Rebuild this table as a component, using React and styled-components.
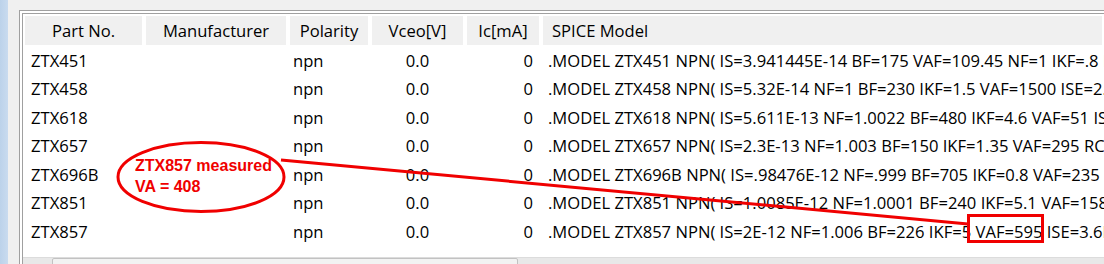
import styled, { createGlobalStyle } from "styled-components";

const GlobalStyle = createGlobalStyle`
  html, body {
    margin: 0;
    padding: 0;
    overflow: hidden;
    background: #f0f0f0;
  }
`;

const COLUMNS = "121px 144px 82px 95px 76px 1fr";

const parts = [
  { part: "ZTX451", spice: ".MODEL ZTX451 NPN( IS=3.941445E-14 BF=175 VAF=109.45 NF=1 IKF=.8 ISE=1.7E-14 NE=1.5" },
  { part: "ZTX458", spice: ".MODEL ZTX458 NPN( IS=5.32E-14 NF=1 BF=230 IKF=1.5 VAF=1500 ISE=2.1E-13 NE=1.5" },
  { part: "ZTX618", spice: ".MODEL ZTX618 NPN( IS=5.611E-13 NF=1.0022 BF=480 IKF=4.6 VAF=51 ISE=1.1E-13 NE=1.4" },
  { part: "ZTX657", spice: ".MODEL ZTX657 NPN( IS=2.3E-13 NF=1.003 BF=150 IKF=1.35 VAF=295 RC=.15 ISE=1E-13" },
  { part: "ZTX696B", spice: ".MODEL ZTX696B NPN( IS=.98476E-12 NF=.999 BF=705 IKF=0.8 VAF=235 ISE=1.2E-13" },
  { part: "ZTX851", spice: ".MODEL ZTX851 NPN( IS=1.0085E-12 NF=1.0001 BF=240 IKF=5.1 VAF=158 ISE=2.5E-13" },
  { part: "ZTX857", spice: ".MODEL ZTX857 NPN( IS=2E-12 NF=1.006 BF=226 IKF=5 VAF=595 ISE=3.6E-13 NE=1.5" },
];

const Window = styled.div`
  position: relative;
  display: flex;
  height: 264px;
  font-family: "Open Sans", "Liberation Sans", sans-serif;
  font-size: 16.6px;
  color: #000;
`;

const Edge = styled.div`
  width: 8px;
  background: linear-gradient(to right, #bcd2ea, #c9dbef);
`;

const Pane = styled.div`
  flex: 1;
  min-width: 0;
  padding: 10px 0 0 11px;
  background: #f0f0f0;
`;

const Grid = styled.div`
  height: 100%;
  box-sizing: border-box;
  display: flex;
  flex-direction: column;
  background: #fff;
  border-top: 4px double #a0a0a0;
  border-left: 4px double #a0a0a0;
  overflow: hidden;
`;

const HeaderRow = styled.div`
  flex-shrink: 0;
  display: grid;
  grid-template-columns: ${COLUMNS};
  height: 32px;
`;

const HeaderCell = styled.div`
  display: flex;
  align-items: center;
  justify-content: ${(p) => (p.$left ? "flex-start" : "center")};
  padding-left: ${(p) => (p.$left ? "9px" : "0")};
  background: #f0f0f0;
  border: 2px solid #fff;
  border-bottom-width: 1px;
  white-space: nowrap;
  overflow: hidden;
`;

const Row = styled.div`
  flex-shrink: 0;
  display: grid;
  grid-template-columns: ${COLUMNS};
  height: 28.5px;
  align-items: center;
`;

const Cell = styled.div`
  text-align: ${(p) => p.$align || "left"};
  padding: ${(p) => p.$pad || "0 8px"};
  white-space: nowrap;
  overflow: hidden;
`;

const Scrollbar = styled.div`
  flex-shrink: 0;
  margin-top: 11px;
  height: 18px;
  display: flex;
  background: #e8e8e8;
  border-top: 1px solid #dcdcdc;
`;

const ArrowButton = styled.div`
  width: 29px;
`;

const Thumb = styled.div`
  width: 464px;
  background: #f2f2f2;
  border: 1px solid #c2c2c2;
  border-radius: 2px 2px 0 0;
`;

const Overlay = styled.svg`
  position: absolute;
  left: 0;
  top: 0;
  pointer-events: none;
`;

const Note = styled.div`
  position: absolute;
  left: 135px;
  top: 155px;
  font-family: "Liberation Sans", Arial, sans-serif;
  font-weight: bold;
  font-size: 16px;
  line-height: 21px;
  color: #f00000;
  white-space: nowrap;
`;

export default function App() {
  return (
    <>
      <GlobalStyle />
      <Window>
        <Edge />
        <Pane>
          <Grid>
            <HeaderRow>
              <HeaderCell>Part No.</HeaderCell>
              <HeaderCell>Manufacturer</HeaderCell>
              <HeaderCell>Polarity</HeaderCell>
              <HeaderCell>Vceo[V]</HeaderCell>
              <HeaderCell>Ic[mA]</HeaderCell>
              <HeaderCell $left>SPICE Model</HeaderCell>
            </HeaderRow>
            {parts.map((p) => (
              <Row key={p.part}>
                <Cell>{p.part}</Cell>
                <Cell />
                <Cell $pad="0 5px">npn</Cell>
                <Cell $align="center">0.0</Cell>
                <Cell $align="right" $pad="0 8px 0 0">0</Cell>
                <Cell $pad="0 0 0 7px">{p.spice}</Cell>
              </Row>
            ))}
            <Scrollbar>
              <ArrowButton />
              <Thumb />
            </Scrollbar>
          </Grid>
        </Pane>

        <Overlay width="1104" height="264">
          <ellipse cx="201" cy="177" rx="83" ry="34.5" fill="none" stroke="#f00000" strokeWidth="3" />
          <line x1="281" y1="160" x2="968" y2="224" stroke="#f00000" strokeWidth="3" />
          <rect x="968.5" y="215.5" width="74" height="26" fill="none" stroke="#f00000" strokeWidth="3" />
        </Overlay>
        <Note>
          ZTX857 measured
          <br />
          VA = 408
        </Note>
      </Window>
    </>
  );
}
